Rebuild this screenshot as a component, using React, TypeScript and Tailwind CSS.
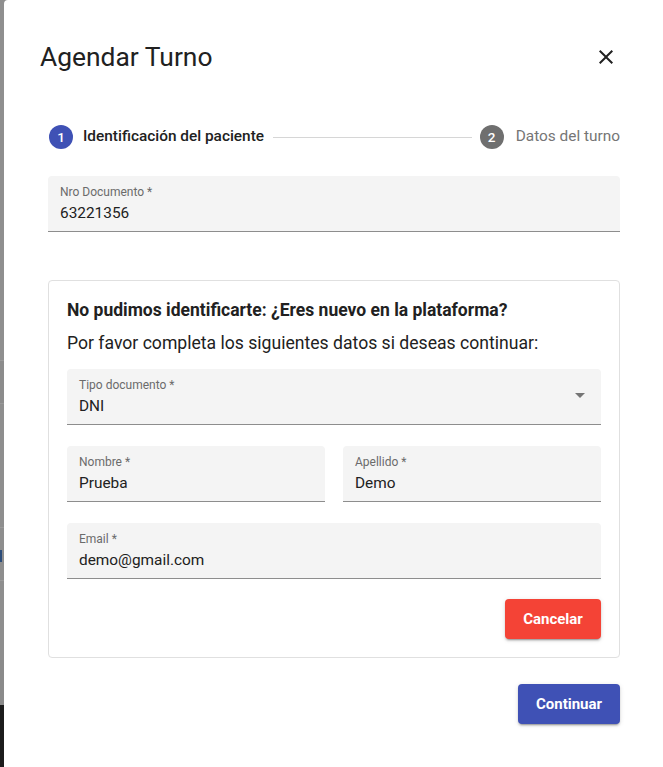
import { ReactNode } from 'react';

const elevation =
  'shadow-[0px_3px_1px_-2px_rgba(0,0,0,0.2),0px_2px_2px_0px_rgba(0,0,0,0.14),0px_1px_5px_0px_rgba(0,0,0,0.12)]';

function Field({ label, value, select, className = '' }: { label: string; value: string; select?: boolean; className?: string }) {
  return (
    <div className={`relative h-14 rounded-t-[4px] border-b border-[#8d8d8d] bg-[#f4f4f4] px-3 pt-[8px] ${className}`}>
      <div className="text-[12px] leading-[17px] text-[#6b6b6b]">{label}</div>
      <div className="mt-px text-[15.4px] leading-[23px] text-[#212121]">{value}</div>
      {select && (
        <svg viewBox="0 0 24 24" className="absolute right-[9px] top-[14px] h-6 w-6 fill-[#757575]">
          <path d="M7 10l5 5 5-5z" />
        </svg>
      )}
    </div>
  );
}

function StepIcon({ n, active }: { n: number; active?: boolean }) {
  return (
    <div
      className={`flex h-6 w-6 shrink-0 items-center justify-center rounded-full text-[13.5px] font-medium text-white ${
        active ? 'bg-[#3f51b5]' : 'bg-[#6f6f6f]'
      }`}
    >
      {n}
    </div>
  );
}

function Button({ children, className }: { children: ReactNode; className: string }) {
  return (
    <button className={`flex h-10 items-center justify-center rounded-[4px] text-[15px] font-bold text-white ${elevation} ${className}`}>
      {children}
    </button>
  );
}

export default function App() {
  return (
    <div className="flex h-[767px] w-[663px] overflow-hidden bg-[#8e8e8e] font-['Roboto','Liberation_Sans',sans-serif]">
      {/* backdrop sliver */}
      <div className="flex w-[4px] shrink-0 flex-col">
        <div className="h-[360px] bg-[#8f8f8f]" />
        <div className="h-[43px] border-t border-[#9a9a9a] bg-[#8c8c8c]" />
        <div className="h-[124px] border-t border-[#999999] bg-[#8e8e8e]" />
        <div className="h-[53px] border-t border-[#9a9a9a] bg-[#8e8e8e]">
          <div className="mt-[22px] h-[12px] w-[2px] bg-[#2c4d7a]" />
        </div>
        <div className="h-[80px] border-t border-[#9a9a9a] bg-[#8e8e8e]" />
        <div className="h-[45px] bg-[#8a8a8a]" />
        <div className="flex-1 bg-[#1c1c1c]" />
      </div>

      <div className="flex-1 rounded-tl-[4px] bg-white">
        {/* title */}
        <div className="ml-[36px] mt-[37px] flex h-10 w-[580px] items-center justify-between">
          <h2 className="text-[26.4px] font-normal leading-8 text-[#212121]">Agendar Turno</h2>
          <button className="mr-[2px] flex h-6 w-6 items-center justify-center">
            <svg viewBox="0 0 24 24" className="h-6 w-6 fill-[#212121]">
              <path d="M19 6.41 17.59 5 12 10.59 6.41 5 5 6.41 10.59 12 5 17.59 6.41 19 12 13.41 17.59 19 19 17.59 13.41 12z" />
            </svg>
          </button>
        </div>

        <div className="ml-[44px] w-[572px]">
          {/* stepper */}
          <div className="mt-[48px] flex h-6 items-center pl-px">
            <StepIcon n={1} active />
            <span className="ml-[10px] text-[15.4px] font-medium text-[#212121]">Identificación del paciente</span>
            <div className="ml-[9px] mr-[8px] h-px flex-1 bg-[#d6d6d6]" />
            <StepIcon n={2} />
            <span className="ml-[12px] text-[15.4px] text-[#757575]">Datos del turno</span>
          </div>

          <Field className="mt-[27px]" label="Nro Documento *" value="63221356" />

          {/* new patient card */}
          <div className="mt-[48px] rounded-[4px] border border-[#e0e0e0] p-[18px]">
            <p className="text-[17.5px] font-bold leading-[22px] text-[#212121]">
              No pudimos identificarte: ¿Eres nuevo en la plataforma?
            </p>
            <p className="mt-[9px] text-[17.6px] leading-[26px] text-[#212121]">
              Por favor completa los siguientes datos si deseas continuar:
            </p>

            <div className="mt-[13px] flex flex-col gap-[21px]">
              <Field label="Tipo documento *" value="DNI" select />
              <div className="grid grid-cols-2 gap-[18px]">
                <Field label="Nombre *" value="Prueba" />
                <Field label="Apellido *" value="Demo" />
              </div>
              <Field label="Email *" value="demo@gmail.com" />
            </div>

            <div className="mt-[20px] flex justify-end">
              <Button className="w-[96px] bg-[#f44336]">Cancelar</Button>
            </div>
          </div>

          <div className="mt-[26px] flex justify-end">
            <Button className="w-[102px] bg-[#3f51b5]">Continuar</Button>
          </div>
        </div>
      </div>
    </div>
  );
}
